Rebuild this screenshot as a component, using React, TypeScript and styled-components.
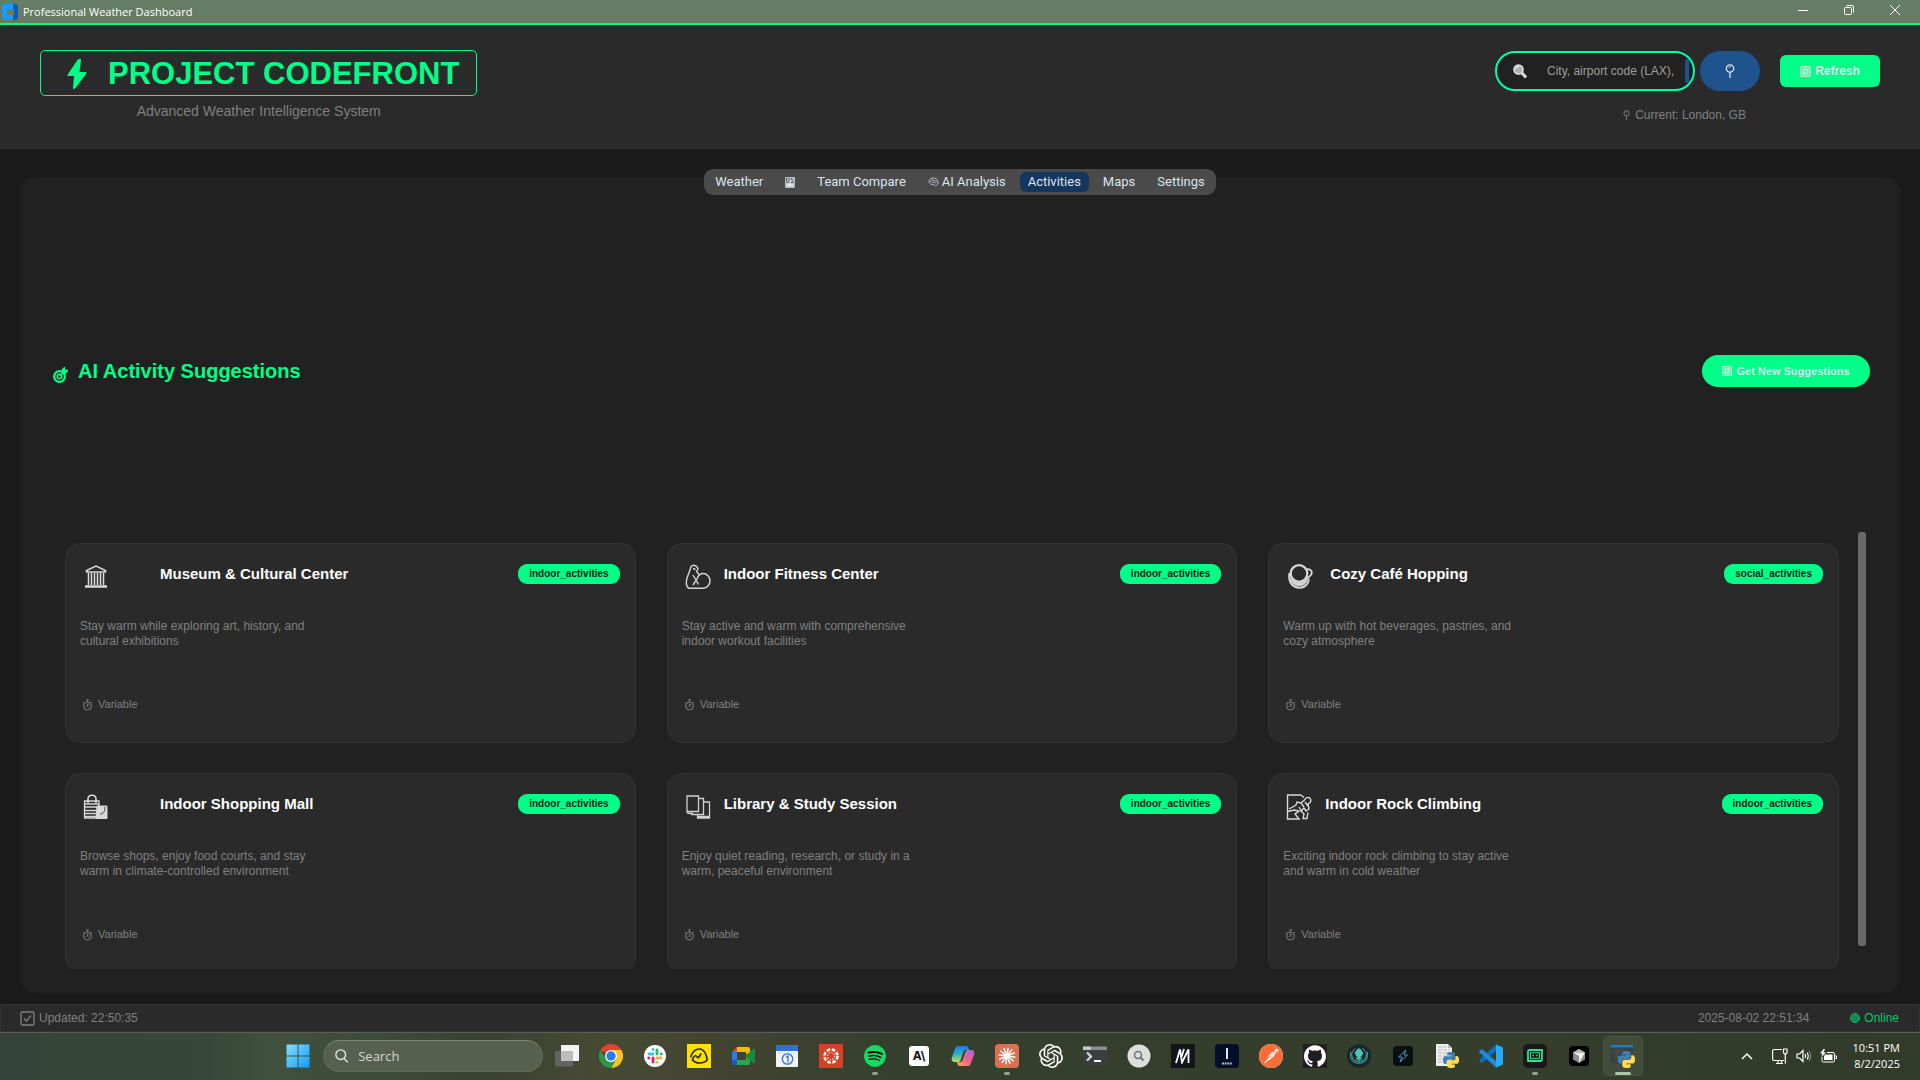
import React from "react";
import styled, { createGlobalStyle } from "styled-components";
import { SiSpotify, SiOpenai, SiPostman, SiGithub, SiGitkraken, SiBasecamp } from "react-icons/si";

const GREEN = "#00ff88";

const GlobalStyle = createGlobalStyle`
  * { box-sizing: border-box; }
  body { margin: 0; background: #1a1a1a; }
  button, input { font-family: inherit; }
`;

const Page = styled.div`
  display: flex;
  flex-direction: column;
  height: 100vh;
  font-family: "Liberation Sans", Arial, sans-serif;
  color: #808080;
  background: #1a1a1a;
`;

/* ---------- window title bar ---------- */

const TitleBar = styled.div`
  display: flex;
  align-items: center;
  justify-content: space-between;
  flex: none;
  height: 25px;
  padding: 0 2px;
  background: #657d65;
  border-bottom: 2px solid ${GREEN};
`;

const WindowName = styled.div`
  display: flex;
  align-items: center;
  gap: 5px;
  color: #ffffff;
  font: 11px/16px "Open Sans", "Noto Sans", sans-serif;
`;

const WindowControls = styled.div`
  display: flex;
  height: 100%;
`;

const WindowButton = styled.button`
  display: flex;
  align-items: center;
  justify-content: center;
  width: 46px;
  padding: 0 0 3px;
  border: 0;
  background: none;
  color: #ffffff;
`;

/* ---------- header ---------- */

const Header = styled.header`
  display: flex;
  justify-content: space-between;
  flex: none;
  height: 124px;
  padding: 25px 40px 0;
  background: #2a2a2a;
`;

const Brand = styled.div`
  display: flex;
  flex-direction: column;
  align-items: center;
  gap: 5px;
`;

const Logo = styled.h1`
  display: flex;
  align-items: center;
  gap: 21px;
  height: 46px;
  margin: 0;
  padding: 2px 17px 0 26px;
  border: 1px solid ${GREEN};
  border-radius: 5px;
  color: ${GREEN};
  font-size: 31px;
  line-height: 42px;
`;

const Tagline = styled.div`
  font-size: 14px;
  line-height: 20px;
`;

const HeaderTools = styled.div`
  display: flex;
  flex-direction: column;
  align-items: center;
  gap: 15px;
  padding-top: 1px;
`;

const ToolRow = styled.div`
  display: flex;
  align-items: center;
`;

const SearchBox = styled.label`
  display: flex;
  align-items: center;
  width: 200px;
  height: 40px;
  padding: 0 4px 0 16px;
  border: 2px solid #00ffaa;
  border-radius: 20px;
  background: #212121;
`;

const SearchInput = styled.input`
  flex: 1;
  min-width: 0;
  margin-left: 20px;
  padding: 0;
  border: 0;
  outline: 0;
  background: none;
  color: #cccccc;
  font-size: 12px;
  line-height: 16px;
  &::placeholder { color: #9e9e9e; opacity: 1; }
`;

const Caret = styled.span`
  width: 4px;
  height: 24px;
  border-radius: 2px;
  background: #1f538d;
`;

const LocateButton = styled.button`
  display: flex;
  align-items: center;
  justify-content: center;
  width: 60px;
  height: 40px;
  margin-left: 5px;
  border: 0;
  border-radius: 20px;
  background: #1f538d;
  color: #dce4ee;
`;

const GreenButton = styled.button<{ $round?: boolean }>`
  display: flex;
  align-items: center;
  justify-content: center;
  gap: 4px;
  width: ${(p) => (p.$round ? 168 : 100)}px;
  height: 32px;
  padding: 0;
  border: 0;
  border-radius: ${(p) => (p.$round ? 16 : 6)}px;
  background: ${GREEN};
  color: #dce4ee;
  font-size: ${(p) => (p.$round ? 11 : 12)}px;
  font-weight: bold;
`;

const RefreshSlot = styled.div`
  margin-left: 20px;
`;

const CurrentPlace = styled.div`
  display: flex;
  align-items: center;
  gap: 5px;
  padding-right: 6px;
  font-size: 12px;
  line-height: 18px;
`;

/* ---------- tabs ---------- */

const Main = styled.main`
  display: flex;
  flex-direction: column;
  flex: 1;
  min-height: 0;
  padding: 20px 20px 11px;
`;

const Tabs = styled.nav`
  position: relative;
  display: flex;
  align-self: center;
  gap: 6px;
  height: 26px;
  margin-bottom: -18px;
  padding: 3px;
  border-radius: 9px;
  background: #4a4a4a;
`;

const Tab = styled.button<{ $active?: boolean }>`
  display: flex;
  align-items: center;
  gap: 3px;
  padding: 0 8px;
  border: 0;
  border-radius: 6px;
  background: ${(p) => (p.$active ? "#14375e" : "transparent")};
  color: #dce4ee;
  font: 13px/16px Roboto, sans-serif;
`;

/* ---------- activities panel ---------- */

const Panel = styled.section`
  display: grid;
  grid-template-rows: 14fr 19fr;
  flex: 1;
  min-height: 0;
  padding: 33px 30px 24px 33px;
  border-radius: 15px;
  background: #212121;
`;

const PanelHeader = styled.div`
  display: flex;
  align-items: center;
  justify-content: space-between;
`;

const PanelTitle = styled.h2`
  display: flex;
  align-items: flex-end;
  gap: 10px;
  margin: 0;
  color: ${GREEN};
  font-size: 20px;
  line-height: 24px;
`;

const ListArea = styled.div`
  display: flex;
  gap: 19px;
  min-height: 0;
  padding: 0 4px 0 12px;
`;

const CardGrid = styled.div`
  display: grid;
  grid-template-columns: repeat(3, 1fr);
  grid-auto-rows: 200px;
  gap: 30px 31px;
  flex: 1;
  padding-top: 11px;
  overflow: hidden;
`;

const ScrollThumb = styled.div`
  width: 8px;
  margin-bottom: 23px;
  border-radius: 3px;
  background: #696969;
`;

const Card = styled.article`
  padding: 20px 15px 20px 14px;
  border: 1px solid #333333;
  border-radius: 15px;
  background: #2a2a2a;
`;

const CardHead = styled.div`
  display: flex;
  height: 20px;
`;

const CardIcon = styled.span<{ $slot: number }>`
  flex: none;
  width: ${(p) => p.$slot}px;
  height: 26px;
  padding-left: 3px;
`;

const CardTitle = styled.h3`
  flex: 1;
  margin: 0;
  color: #ffffff;
  font-size: 15px;
  line-height: 20px;
`;

const Badge = styled.span`
  height: 20px;
  padding: 0 11px;
  border-radius: 9px;
  background: ${GREEN};
  color: #1a1a1a;
  font-size: 10px;
  font-weight: bold;
  line-height: 20px;
`;

const CardText = styled.p`
  max-width: 242px;
  margin: 35px 0 48px;
  font-size: 12px;
  line-height: 15px;
`;

const Duration = styled.div`
  display: flex;
  align-items: center;
  gap: 5px;
  padding-left: 2px;
  font-size: 11px;
  line-height: 15px;
`;

/* ---------- status bar ---------- */

const StatusBar = styled.footer`
  display: flex;
  align-items: center;
  flex: none;
  height: 28px;
  padding: 0 20px 0 19px;
  border: 1px solid #333333;
  background: #2a2a2a;
  font-size: 12px;
`;

const StatusItem = styled.span<{ $online?: boolean }>`
  display: flex;
  align-items: center;
  gap: 4px;
  color: ${(p) => (p.$online ? "#00c96b" : "#808080")};
`;

const Timestamp = styled.time`
  margin: 0 41px 0 auto;
`;

/* ---------- taskbar ---------- */

const Taskbar = styled.div`
  display: flex;
  align-items: center;
  flex: none;
  height: 48px;
  padding: 0 0 1px 276px;
  border-top: 1px solid #5a5d56;
  background: linear-gradient(90deg, #34443a 0, #35483a 11%, #3f513e 14%, #3e4b36 20%, #394130 25%, #474a33 31%, #424430 37%, #353f2d 47%, #343e2b 80%, #323b29 100%);
  font-family: "Open Sans", "Noto Sans", sans-serif;
`;

const TaskSearch = styled.label`
  display: flex;
  align-items: center;
  gap: 10px;
  width: 220px;
  height: 32px;
  margin: 0 2px 0 3px;
  padding: 0 11px;
  border: 1px solid #616a58;
  border-top-color: #7b8272;
  border-radius: 16px;
  background: #566150;
`;

const TaskSearchInput = styled.input`
  width: 100%;
  padding: 0;
  border: 0;
  outline: 0;
  background: none;
  font-size: 13px;
  line-height: 18px;
  &::placeholder { color: #d3d6cf; opacity: 1; }
`;

const AppButton = styled.button<{ $active?: boolean }>`
  position: relative;
  display: flex;
  align-items: center;
  justify-content: center;
  width: ${(p) => (p.$active ? 40 : 44)}px;
  height: 40px;
  margin: 0 ${(p) => (p.$active ? 2 : 0)}px;
  padding: 0;
  border: ${(p) => (p.$active ? "1px solid #495442" : "0")};
  border-radius: 5px;
  background: ${(p) => (p.$active ? "#414c3a" : "none")};
`;

const RunMark = styled.span<{ $active?: boolean }>`
  position: absolute;
  bottom: ${(p) => (p.$active ? 0 : 1)}px;
  width: ${(p) => (p.$active ? 16 : 6)}px;
  height: 3px;
  border-radius: 2px;
  background: ${(p) => (p.$active ? "#a9c8a8" : "#9aa096")};
`;

const Tile = styled.span<{ $bg: string; $size?: number; $radius?: number; $color?: string }>`
  display: flex;
  align-items: center;
  justify-content: center;
  width: ${(p) => p.$size ?? 24}px;
  height: ${(p) => p.$size ?? 24}px;
  border-radius: ${(p) => p.$radius ?? 0}px;
  background: ${(p) => p.$bg};
  color: ${(p) => p.$color ?? "#ffffff"};
  font: bold 12px/16px Inter, sans-serif;
`;

const Tray = styled.div`
  display: flex;
  align-items: center;
  gap: 8px;
  margin-left: auto;
  padding-right: 20px;
  color: #ffffff;
`;

const Chevron = styled.span`
  display: flex;
  margin-right: 11px;
`;

const Clock = styled.div`
  margin-left: 8px;
  text-align: right;
  font-size: 11px;
  line-height: 16px;
`;

/* ---------- drawings ---------- */

const AppIcon = () => (
  <svg width="16" height="16" viewBox="0 0 16 16">
    <path d="M4 0h8v5H6a1 1 0 0 0-1 1v4a1 1 0 0 0 1 1h6v5H4a4 4 0 0 1-4-4V4a4 4 0 0 1 4-4z" fill="#1a9bff" />
    <path d="M11 0h2a3 3 0 0 1 3 3v10a3 3 0 0 1-3 3h-2v-5h1V5h-1z" fill="#0a5fb0" />
  </svg>
);

const Bolt = () => (
  <svg width="20" height="32" viewBox="0 0 20 32">
    <path d="M12 1Q14 0 14 2L12.500 14H19Q20 14.500 19 16L8.500 30Q6 32 6 30L7 18H1Q0 17.500 1 16L10.500 2z" fill={GREEN} />
  </svg>
);

const Magnifier = () => (
  <svg width="14" height="15" viewBox="0 0 14 15">
    <circle cx="5.500" cy="5.500" r="4.500" fill="#a9afb2" stroke="#e4e4e4" strokeWidth="1.600" />
    <path d="M3 5a3 3 0 0 1 3-2.500" fill="none" stroke="#fff" />
    <path d="M9 9l4 4.500" stroke="#dcdcdc" strokeWidth="3" />
  </svg>
);

const Pin = ({ size = 14 }: { size?: number }) => (
  <svg width={(size * 10) / 14} height={size} viewBox="0 0 10 14" fill="none" stroke="currentColor">
    <circle cx="5" cy="4.500" r="3.700" strokeWidth="1.300" />
    <path d="M4 4a1.400 1.400 0 0 1 2-1.300" />
    <path d="M5 8v6" strokeWidth="1.300" />
  </svg>
);

const RefreshGlyph = ({ size = 11 }: { size?: number }) => (
  <svg width={size} height={size} viewBox="0 0 11 11" fill="none" stroke="#b9ecd5">
    <rect x="0.500" y="0.500" width="10" height="10" rx="1" fill="#5cf3ac" />
    <path d="M3 5a2.500 2 0 0 1 4.500-1M8 2.500v2H6M8 6a2.500 2 0 0 1-4.500 1M3 8.500v-2h2" strokeWidth="1.400" />
  </svg>
);

const ChartGlyph = () => (
  <svg width="10" height="11" viewBox="0 0 10 11">
    <rect width="10" height="11" rx="1" fill="#b9bdc2" />
    <path d="M1.500 1v3M4 1v2.500M6 1l2 3M1 5h3M6 5.500h3" stroke="#55585b" />
    <path d="M2 6.500h6v3H2z" fill="#e4e6e8" />
  </svg>
);

const BrainGlyph = () => (
  <svg width="11" height="10" viewBox="0 0 10 10" fill="none" stroke="#b9bdc2" strokeWidth="1">
    <path d="M1 6C-.3 4 1.500 1 4.500 1S10 3 9.500 6 6.500 9 6 8 2 8 1 6z" />
    <path d="M2 5c0-2 2-2.500 3-1.500S8 3 8 5M3.500 6c1-1.500 2.500-1 3.500.5" />
  </svg>
);

const TargetGlyph = () => (
  <svg width="15" height="16" viewBox="0 0 15 16" fill="none" stroke={GREEN}>
    <circle cx="6.500" cy="9.500" r="5.400" strokeWidth="2.200" />
    <circle cx="6.500" cy="9.500" r="2.200" strokeWidth="1.600" />
    <path d="M6.500 9L12 3.500M9.500 6V2.500L11.500.5v3h3L12.500 6z" fill={GREEN} strokeWidth="1.400" />
  </svg>
);

const Stopwatch = () => (
  <svg width="11" height="12" viewBox="0 0 11 12" fill="none" stroke="#808080">
    <circle cx="5.500" cy="7" r="4" />
    <path d="M5.500 7V4.500M5.500 7l1.500 1.500M3.500 7.500h1M6.500 5.500h1" strokeWidth="0.900" />
    <path d="M4 .8h3M5.500 1v2M2 3L1 4M9 3l1 1" strokeWidth="0.900" />
  </svg>
);

const museum = (
  <svg width="26" height="26" viewBox="0 0 26 26" fill="none" stroke="#dadada">
    <path d="M3.500 8V6.500L13 2l9.500 4.500V8z" strokeWidth="1.500" />
    <path d="M5.500 9v12M8.500 9v12M11.500 9v12M14.500 9v12M17.500 9v12M20.500 9v12" strokeWidth="1.500" />
    <path d="M2 22.500h22" strokeWidth="2.500" />
  </svg>
);

const arm = (
  <svg width="26" height="26" viewBox="0 0 26 26" fill="none" stroke="#d8d8d8" strokeWidth="1.400">
    <path d="M10.500 5.500L8 4.500M6.500 2Q10 0 12.500 3.500L13 5 11.500 7.500 14 10.500M6.500 2Q5.500 3 5 6L2 14Q0 22 4 24.300H18C22 24 25 21 25 17S22 9.500 18 9.500C14 9.500 13 12 12 15L8 21M8 11l5.500 9.500" />
  </svg>
);

const cup = (
  <svg width="28" height="26" viewBox="0 1 28 26" fill="none" stroke="#d8d8d8">
    <circle cx="13" cy="10.500" r="8.300" strokeWidth="2.200" />
    <path d="M20.500 6.500c6-1.500 8 5 0 9" strokeWidth="1.800" />
    <path d="M3.500 10c-1 6 .5 11 5 13.500 3 1.500 7 1.500 10 0 3-2 4.500-5 4-8" strokeWidth="2" />
    <path d="M4.500 15.500c3 5.500 13 6.500 17 0-1.500 6-4 7-8.500 7s-7.500-2-8.500-7z" fill="#d8d8d8" />
  </svg>
);

const bags = (
  <svg width="26" height="26" viewBox="0 0 26 26" fill="none" stroke="#d8d8d8">
    <path d="M5 9V5c0-5 8-5 8 0v4" strokeWidth="1.600" />
    <path d="M1.500 7h14.500v17H1.500z" strokeWidth="1.300" />
    <path d="M2 10h14M2 13h14M2 16.500h13M2 19.500h13M2 22.500h13" strokeWidth="1.500" />
    <path d="M14 12h10v12.500H13z" fill="#d8d8d8" stroke="#d8d8d8" />
    <path d="M22 13c0 5-2 7-5 7" stroke="#444" />
  </svg>
);

const books = (
  <svg width="26" height="26" viewBox="0 0 26 26" fill="none" stroke="#d0d0d0" strokeWidth="1.300">
    <path d="M2 2h11.500v15.500H2zM2 17.500q0 2 3 2h3" />
    <path d="M14 4.500h4.500V20.500H7v-2" />
    <path d="M19 8H24.500v16H12.500V21M12.500 22.500h12" />
  </svg>
);

const climber = (
  <svg width="26" height="26" viewBox="0 0 26 26" fill="none" stroke="#dadada" strokeWidth="1.400">
    <path d="M15 1H1.500v24H13l-4-5 4-3-4.500-1-7 1.500M15 1l3 2.500" />
    <path d="M19 5.500a3 3 0 1 1 5 3L22 10l1 5-3 2-2-3-3 3 3 3-1 4.500h4l1-6M19 5.500L15 9l-4-1-1 3-7 4M15 9l3 4M19 8l3 4M13 13l3 5" />
  </svg>
);

const Python = ({ size }: { size: number }) => (
  <svg width={size} height={size} viewBox="0 0 24 24">
    <path fill="#3f7fb5" d="M14.25.18l.9.2.73.26.59.3.45.32.34.34.25.34.16.33.1.3.04.26.02.2-.01.13V8.500l-.05.63-.13.55-.21.46-.26.38-.3.31-.33.25-.35.19-.35.14-.33.1-.3.07-.26.04-.21.02H8.770l-.69.05-.59.14-.5.22-.41.27-.33.32-.27.35-.2.36-.15.37-.1.35-.07.32-.04.27-.02.21v3.060H3.170l-.21-.03-.28-.07-.32-.12-.35-.18-.36-.26-.36-.36-.35-.46-.32-.59-.28-.73-.21-.88-.14-1.050-.05-1.230.06-1.220.16-1.040.24-.87.32-.71.36-.57.4-.44.42-.33.42-.24.4-.16.36-.1.32-.05.24-.01h.16l.06.01h8.160v-.83H6.180l-.01-2.750-.02-.37.05-.34.11-.31.17-.28.25-.26.31-.23.38-.2.44-.18.51-.15.58-.12.64-.1.71-.06.77-.04.84-.02z" />
    <path fill="#ffdc4c" d="M21.040 6.110l.28.06.32.12.35.18.36.27.36.35.35.47.32.59.28.73.21.88.14 1.040.05 1.230-.06 1.230-.16 1.040-.24.86-.32.71-.36.57-.4.45-.42.33-.42.24-.4.16-.36.09-.32.05-.24.02-.16-.01h-8.220v.82h5.840l.01 2.760.02.36-.05.34-.11.31-.17.29-.25.25-.31.24-.38.2-.44.17-.51.15-.58.13-.64.09-.71.07-.77.04-.84.01-1.270-.04-1.070-.14-.9-.2-.73-.25-.59-.3-.45-.33-.34-.34-.25-.34-.16-.33-.1-.3-.04-.25-.02-.2.01-.13v-5.340l.05-.64.13-.54.21-.46.26-.38.3-.32.33-.24.35-.2.35-.14.33-.1.3-.06.26-.04.21-.02.13-.01h5.840l.69-.05.59-.14.5-.21.41-.28.33-.32.27-.35.2-.36.15-.36.1-.35.07-.32.04-.28.02-.21V6.070h2.090z" />
  </svg>
);

const Windows = () => (
  <svg width="24" height="24" viewBox="0 0 24 24">
    <defs>
      <linearGradient id="win" x1="0" y1="0" x2="24" y2="24" gradientUnits="userSpaceOnUse">
        <stop offset="0" stopColor="#8adfff" />
        <stop offset="1" stopColor="#0a9bff" />
      </linearGradient>
    </defs>
    <path fill="url(#win)" d="M0.500 0.500h11v11h-11zM12.500 0.500h11v11h-11zM0.500 12.500h11v11h-11zM12.500 12.500h11v11h-11z" />
  </svg>
);

const TaskView = () => (
  <svg width="24" height="24" viewBox="0 0 24 24">
    <path d="M6 1h18v16H6z" fill="#f4f4f4" />
    <path d="M0 7h18v15.500H0z" fill="#636363" />
    <path d="M6 7h12v10H6z" fill="#bdbdbd" />
  </svg>
);

const Chrome = () => (
  <svg width="24" height="24" viewBox="0 0 24 24">
    <path d="M12 12L1.600 6A12 12 0 0 1 22.400 6z" fill="#e8402f" />
    <path d="M12 12V6h10.400A12 12 0 0 1 12 24l5.200-9z" fill="#fcc31e" />
    <path d="M12 12l5.200 3L12 24A12 12 0 0 1 1.600 6l5.200 9z" fill="#2a9a46" />
    <circle cx="12" cy="12" r="6" fill="#fff" />
    <circle cx="12" cy="12" r="4.700" fill="#2a7bf0" />
  </svg>
);

const Slack = () => (
  <svg width="22" height="22" viewBox="0 0 22 22">
    <circle cx="11" cy="11" r="11" fill="#fff" />
    <g strokeWidth="2.800" strokeLinecap="round">
      <path d="M5 9h4" stroke="#36c5f0" />
      <path d="M9 4.500h.1" stroke="#36c5f0" />
      <path d="M13 5v4" stroke="#2eb67d" />
      <path d="M17.300 9h.1" stroke="#2eb67d" />
      <path d="M13 13h4" stroke="#ecb22e" />
      <path d="M13 17.300h.1" stroke="#ecb22e" />
      <path d="M9 13v4" stroke="#e01e5a" />
      <path d="M4.700 13h.1" stroke="#e01e5a" />
    </g>
  </svg>
);

const Meet = () => (
  <svg width="23" height="20" viewBox="0 0 23 20">
    <path d="M5 1h11a2 2 0 0 1 2 2v5h-4V6H5z" fill="#fbbc05" />
    <path d="M0 6l5-5v5z" fill="#ea4335" />
    <path d="M0 6h5v8H0z" fill="#2c7be8" />
    <path d="M0 14h5v5H2a2 2 0 0 1-2-2z" fill="#1a5fd0" />
    <path d="M5 14h9v-3h4v6a2 2 0 0 1-2 2H5z" fill="#2ea650" />
    <path d="M13 10l8-7q2-1 2 0v14q0 1-2 0z" fill="#188a3c" />
  </svg>
);

const Calendar = () => (
  <svg width="22" height="22" viewBox="0 0 22 22">
    <rect width="22" height="22" rx="1" fill="#f1f3f6" />
    <path d="M0 0h22v6H0z" fill="#2f6fe0" />
    <path d="M2 8h18" stroke="#c5ccd6" strokeDasharray="2 1" />
    <circle cx="11.500" cy="14" r="5.200" fill="none" stroke="#2f6fe0" strokeWidth="1.300" />
    <path d="M10 12.500l2-1.500v6.500" fill="none" stroke="#2f6fe0" strokeWidth="1.300" />
  </svg>
);

const Canvas = () => (
  <svg width="18" height="18" viewBox="0 0 18 18" fill="none" stroke="#fff">
    <circle cx="9" cy="9" r="6.500" strokeWidth="2.600" strokeDasharray="3.500 1.605" />
    <circle cx="9" cy="9" r="3.500" strokeWidth="1.200" strokeDasharray="1.100 1.649" />
  </svg>
);

const Copilot = () => (
  <svg width="24" height="22" viewBox="0 0 24 22">
    <defs>
      <linearGradient id="cpa" x1="0" y1="0" x2="0" y2="1">
        <stop offset="0" stopColor="#2179e6" />
        <stop offset="0.500" stopColor="#25b3c8" />
        <stop offset="1" stopColor="#c7da4d" />
      </linearGradient>
      <linearGradient id="cpb" x1="1" y1="0" x2="0" y2="1">
        <stop offset="0" stopColor="#9a6bf0" />
        <stop offset="0.500" stopColor="#ee5f8d" />
        <stop offset="1" stopColor="#ffa35c" />
      </linearGradient>
    </defs>
    <path d="M7 1h8c2 0 2.500 1.500 3 4h-3c-2 0-2.500 1-3 3L10 14c-.5 2-1.500 3-3 3H4c-3 0-4-2-3-5L4 4c.5-2 1-3 3-3z" fill="url(#cpa)" />
    <path d="M17 21H9c-2 0-2.500-1.500-3-4h3c2 0 2.500-1 3-3L14 8c.5-2 1.500-3 3-3h3c3 0 4 2 3 5l-3 8c-.5 2-1 3-3 3z" fill="url(#cpb)" />
  </svg>
);

const Burst = () => (
  <svg width="18" height="18" viewBox="-9 -9 18 18" stroke="#fff" strokeWidth="1.500">
    {[0, 30, 60, 90, 120, 150, 180, 210, 240, 270, 300, 330].map((a) => (
      <path key={a} d="M0 0V-8.500" transform={`rotate(${a + 8})`} />
    ))}
  </svg>
);

const Terminal = () => (
  <svg width="24" height="20" viewBox="0 0 24 20">
    <rect width="24" height="19" y="0.500" rx="1" fill="#3b3d40" />
    <path d="M1 .5h22a1 1 0 0 1 1 1V4H0V1.500a1 1 0 0 1 1-1z" fill="#8b8d8f" />
    <path d="M0 .5h8V4H0z" fill="#c5c5c5" />
    <path d="M4 6.500l4 4-4 4" fill="none" stroke="#dadada" strokeWidth="2.200" />
    <path d="M11 15h7" stroke="#fff" strokeWidth="2" />
  </svg>
);

const Finder = () => (
  <svg width="24" height="24" viewBox="0 0 24 24" fill="none">
    <circle cx="12" cy="12" r="11.500" fill="#dedede" />
    <circle cx="11" cy="11" r="3.500" stroke="#6e6e6e" strokeWidth="1.500" />
    <path d="M13.500 13.500l3 3" stroke="#6e6e6e" strokeWidth="2" />
  </svg>
);

const SlantedM = () => (
  <svg width="16" height="16" viewBox="0 0 16 16" fill="none" stroke="#fff" strokeWidth="1.800">
    <path d="M1 15L5 1.500 7 14.500 13.500 1.500V15M9 1L6.500 9" />
  </svg>
);

const Kings = () => (
  <svg width="14" height="20" viewBox="0 0 14 20" stroke="#fff">
    <path d="M7 2v11" strokeWidth="1.800" />
    <path d="M2 17.500h10" strokeWidth="2" strokeDasharray="2 .6" opacity="0.700" />
  </svg>
);

const OutlineBolt = () => (
  <svg width="12" height="14" viewBox="0 0 12 14" fill="none" stroke="#4a9cc4">
    <path d="M9 1L1.500 8H5l-2 5 7.500-7H7z" />
  </svg>
);

const PyFile = () => (
  <svg width="24" height="24" viewBox="0 0 24 24">
    <path d="M1 0h12l4 4v18H1z" fill="#ededed" />
    <path d="M13 0v4h4" fill="#b9b9b9" />
    <path d="M3 3h8M3 6h12M3 9h12M3 12h10M3 15h7M3 18h6" stroke="#bcbcbc" strokeDasharray="4 1" />
    <g transform="translate(8 8)"><Python size={16} /></g>
  </svg>
);

const Code = () => (
  <svg width="24" height="24" viewBox="0 0 24 24">
    <path d="M17 .5L23 3q1 .5 1 1.500v15q0 1-1 1.500l-6 2.500z" fill="#2aa9f5" />
    <path d="M17 .5v6.500L3.500 18.500q-.7.500-1.300 0L.5 17q-.7-.7 0-1.400z" fill="#0a6fc0" />
    <path d="M17 23.500V17L3.500 5.500q-.7-.5-1.300 0L.5 7q-.7.700 0 1.400z" fill="#1a8be0" />
  </svg>
);

const Robot = () => (
  <svg width="16" height="14" viewBox="0 0 16 14" fill="none" stroke="#35e08a" strokeWidth="1.800">
    <path d="M1 12V2.500A1.500 1.500 0 0 1 2.500 1H15v9a2 2 0 0 1-2 2z" />
    <rect x="3.500" y="3.800" width="9" height="5.500" strokeWidth="1" />
    <path d="M5.500 6.500H7M9.300 6.500h1.500" strokeWidth="1.600" />
  </svg>
);

const Cube = () => (
  <svg width="12" height="14" viewBox="0 0 12 14">
    <path d="M6 0l6 3.500v7L6 14 0 10.500v-7z" fill="#8d8d8d" />
    <path d="M0 3.500h12L6 14V7z" fill="#f0f0f0" />
    <path d="M6 0l6 3.500H0z" fill="#b8b8b8" />
  </svg>
);

const PyApp = () => (
  <svg width="24" height="24" viewBox="0 0 24 24">
    <path d="M0 1h22v19H0z" fill="#3c4146" />
    <path d="M0 1h22v2.500H0z" fill="#0f7fd0" />
    <path d="M3 7h8M3 10h5M3 13h6" stroke="#3f6542" />
    <g transform="translate(7 7)"><Python size={17} /></g>
  </svg>
);

/* ---------- data ---------- */

const activities = [
  { icon: museum, slot: 80, title: "Museum & Cultural Center", tag: "indoor_activities", text: "Stay warm while exploring art, history, and cultural exhibitions" },
  { icon: arm, slot: 42, title: "Indoor Fitness Center", tag: "indoor_activities", text: "Stay active and warm with comprehensive indoor workout facilities" },
  { icon: cup, slot: 47, title: "Cozy Café Hopping", tag: "social_activities", text: "Warm up with hot beverages, pastries, and cozy atmosphere" },
  { icon: bags, slot: 80, title: "Indoor Shopping Mall", tag: "indoor_activities", text: "Browse shops, enjoy food courts, and stay warm in climate-controlled environment" },
  { icon: books, slot: 42, title: "Library & Study Session", tag: "indoor_activities", text: "Enjoy quiet reading, research, or study in a warm, peaceful environment" },
  { icon: climber, slot: 42, title: "Indoor Rock Climbing", tag: "indoor_activities", text: "Exciting indoor rock climbing to stay active and warm in cold weather" },
];

const apps: { name: string; art: React.ReactNode; running?: boolean; active?: boolean }[] = [
  { name: "Task view", art: <TaskView /> },
  { name: "Chrome", art: <Chrome /> },
  { name: "Slack", art: <Slack /> },
  { name: "Basecamp", art: <Tile $bg="#ffe000" $color="#1d2d35"><SiBasecamp size={18} /></Tile> },
  { name: "Meet", art: <Meet /> },
  { name: "Calendar", art: <Calendar /> },
  { name: "Canvas", art: <Tile $bg="#d64027"><Canvas /></Tile> },
  { name: "Spotify", art: <Tile $bg="#101010" $size={22} $radius={11} $color="#1ed760"><SiSpotify size={22} /></Tile>, running: true },
  { name: "Anthropic", art: <Tile $bg="#ffffff" $size={20} $radius={3} $color="#111111">A\</Tile> },
  { name: "Copilot", art: <Copilot /> },
  { name: "Claude", art: <Tile $bg="#d97052" $radius={4}><Burst /></Tile>, running: true },
  { name: "ChatGPT", art: <SiOpenai size={24} color="#ffffff" /> },
  { name: "Terminal", art: <Terminal /> },
  { name: "Finder", art: <Finder /> },
  { name: "Mem", art: <Tile $bg="#14151b"><SlantedM /></Tile> },
  { name: "Kings", art: <Tile $bg="#020f2b" $radius={4}><Kings /></Tile> },
  { name: "Postman", art: <Tile $bg="#ffffff" $radius={12} $color="#ff6c37"><SiPostman size={24} /></Tile> },
  { name: "GitHub", art: <Tile $bg="#211d20"><SiGithub size={22} /></Tile> },
  { name: "GitKraken", art: <Tile $bg="#1b262b" $radius={12} $color="#4cc6bb"><SiGitkraken size={18} /></Tile> },
  { name: "Bolt", art: <Tile $bg="#0c0f12" $size={20} $radius={4}><OutlineBolt /></Tile> },
  { name: "Python file", art: <PyFile /> },
  { name: "Code", art: <Code /> },
  { name: "Robot", art: <Tile $bg="#17191c" $radius={5}><Robot /></Tile>, running: true },
  { name: "Cursor", art: <Tile $bg="#000000" $size={20} $radius={4}><Cube /></Tile> },
  { name: "Python", art: <PyApp />, active: true },
];

export default function App() {
  return (
    <Page>
      <GlobalStyle />
      <TitleBar>
        <WindowName><AppIcon />Professional Weather Dashboard</WindowName>
        <WindowControls>
          <WindowButton aria-label="Minimize">
            <svg width="10" height="10" viewBox="0 0 10 10"><path d="M0 5.500h10" stroke="currentColor" /></svg>
          </WindowButton>
          <WindowButton aria-label="Restore">
            <svg width="10" height="10" viewBox="0 0 10 10" fill="none" stroke="currentColor">
              <rect x="0.500" y="2.500" width="7" height="7" rx="1" /><path d="M2.500.5H8a1.500 1.500 0 0 1 1.500 1.500v5.500" />
            </svg>
          </WindowButton>
          <WindowButton aria-label="Close">
            <svg width="10" height="10" viewBox="0 0 10 10"><path d="M0 0l10 10M10 0L0 10" stroke="currentColor" /></svg>
          </WindowButton>
        </WindowControls>
      </TitleBar>

      <Header>
        <Brand>
          <Logo><Bolt />PROJECT CODEFRONT</Logo>
          <Tagline>Advanced Weather Intelligence System</Tagline>
        </Brand>
        <HeaderTools>
          <ToolRow>
            <SearchBox>
              <Magnifier />
              <SearchInput aria-label="Location" placeholder="City, airport code (LAX)," />
              <Caret />
            </SearchBox>
            <LocateButton aria-label="Use my location"><Pin /></LocateButton>
            <RefreshSlot><GreenButton><RefreshGlyph />Refresh</GreenButton></RefreshSlot>
          </ToolRow>
          <CurrentPlace><Pin size={10} />Current: London, GB</CurrentPlace>
        </HeaderTools>
      </Header>

      <Main>
        <Tabs>
          <Tab>Weather</Tab>
          <Tab aria-label="Charts"><ChartGlyph /></Tab>
          <Tab>Team Compare</Tab>
          <Tab><BrainGlyph />AI Analysis</Tab>
          <Tab $active>Activities</Tab>
          <Tab>Maps</Tab>
          <Tab>Settings</Tab>
        </Tabs>
        <Panel>
          <PanelHeader>
            <PanelTitle><TargetGlyph />AI Activity Suggestions</PanelTitle>
            <GreenButton $round><RefreshGlyph size={10} />Get New Suggestions</GreenButton>
          </PanelHeader>
          <ListArea>
            <CardGrid>
              {activities.map((a) => (
                <Card key={a.title}>
                  <CardHead>
                    <CardIcon $slot={a.slot}>{a.icon}</CardIcon>
                    <CardTitle>{a.title}</CardTitle>
                    <Badge>{a.tag}</Badge>
                  </CardHead>
                  <CardText>{a.text}</CardText>
                  <Duration><Stopwatch />Variable</Duration>
                </Card>
              ))}
            </CardGrid>
            <ScrollThumb />
          </ListArea>
        </Panel>
      </Main>

      <StatusBar>
        <StatusItem>
          <svg width="15" height="15" viewBox="0 0 15 15" fill="none" stroke="#808080" strokeWidth="1.300">
            <rect x="1" y="1" width="13" height="13" rx="1.500" /><path d="M4 7.500L6.500 10 11 4.500" />
          </svg>
          Updated: 22:50:35
        </StatusItem>
        <Timestamp>2025-08-02 22:51:34</Timestamp>
        <StatusItem $online>
          <svg width="10" height="10" viewBox="0 0 10 10">
            <circle cx="5" cy="5" r="4.500" fill="#0f7a48" stroke="#12b868" />
            <path d="M1.500 6.500l5-5M2.500 8.500l6-6M5 9l4-4" stroke="#1fa567" />
          </svg>
          Online
        </StatusItem>
      </StatusBar>

      <Taskbar>
        <AppButton aria-label="Start"><Windows /></AppButton>
        <TaskSearch>
          <svg width="15" height="16" viewBox="0 0 15 16" fill="none" stroke="#e2e5e0" strokeWidth="1.600">
            <circle cx="6.500" cy="6.500" r="5.500" /><path d="M10.500 11l4 4" />
          </svg>
          <TaskSearchInput aria-label="Search" placeholder="Search" />
        </TaskSearch>
        {apps.map((a) => (
          <AppButton key={a.name} aria-label={a.name} $active={a.active}>
            {a.art}
            {(a.running || a.active) && <RunMark $active={a.active} />}
          </AppButton>
        ))}
        <Tray>
          <Chevron>
            <svg width="12" height="7" viewBox="0 0 12 7" fill="none" stroke="#fff" strokeWidth="1.500"><path d="M1 6l5-5 5 5" /></svg>
          </Chevron>
          <svg width="16" height="17" viewBox="0 0 16 17" fill="none" stroke="#fff" strokeWidth="1.200">
            <path d="M10 1.500H2A1.500 1.500 0 0 0 .6 3v8A1.500 1.500 0 0 0 2 12.500h10M4 15.500h7M6 12.500v3M9.500 12.500v3" />
            <path d="M11.500 1h3.500v4l-1.700 1.500L11.500 5zM13.300 6.500v9" />
          </svg>
          <svg width="16" height="14" viewBox="0 0 16 14" fill="none" stroke="#fff" strokeWidth="1.200">
            <path d="M1 5h2.500L7 1.500v11L3.500 9H1z" /><path d="M9 5q1.500 2 0 4M11 3.500q2.500 3.500 0 7" /><path d="M13 2q3.500 5 0 10" opacity="0.400" />
          </svg>
          <svg width="17" height="14" viewBox="0 0 17 14">
            <path d="M5 5.500h7.500v5.500H4V7.500z" fill="#fff" />
            <path d="M7 3.500h6a1.500 1.500 0 0 1 1.500 1.500v6.500A1.500 1.500 0 0 1 13 13H3.500A1.500 1.500 0 0 1 2 11.500V8M15 7h1.500v2.500H15" fill="none" stroke="#fff" />
            <path d="M3.500 0L0 4.500h2.500L1.500 8 6 3.500H3.500L5 0z" fill="#fff" />
          </svg>
          <Clock>10:51 PM<br />8/2/2025</Clock>
        </Tray>
      </Taskbar>
    </Page>
  );
}
